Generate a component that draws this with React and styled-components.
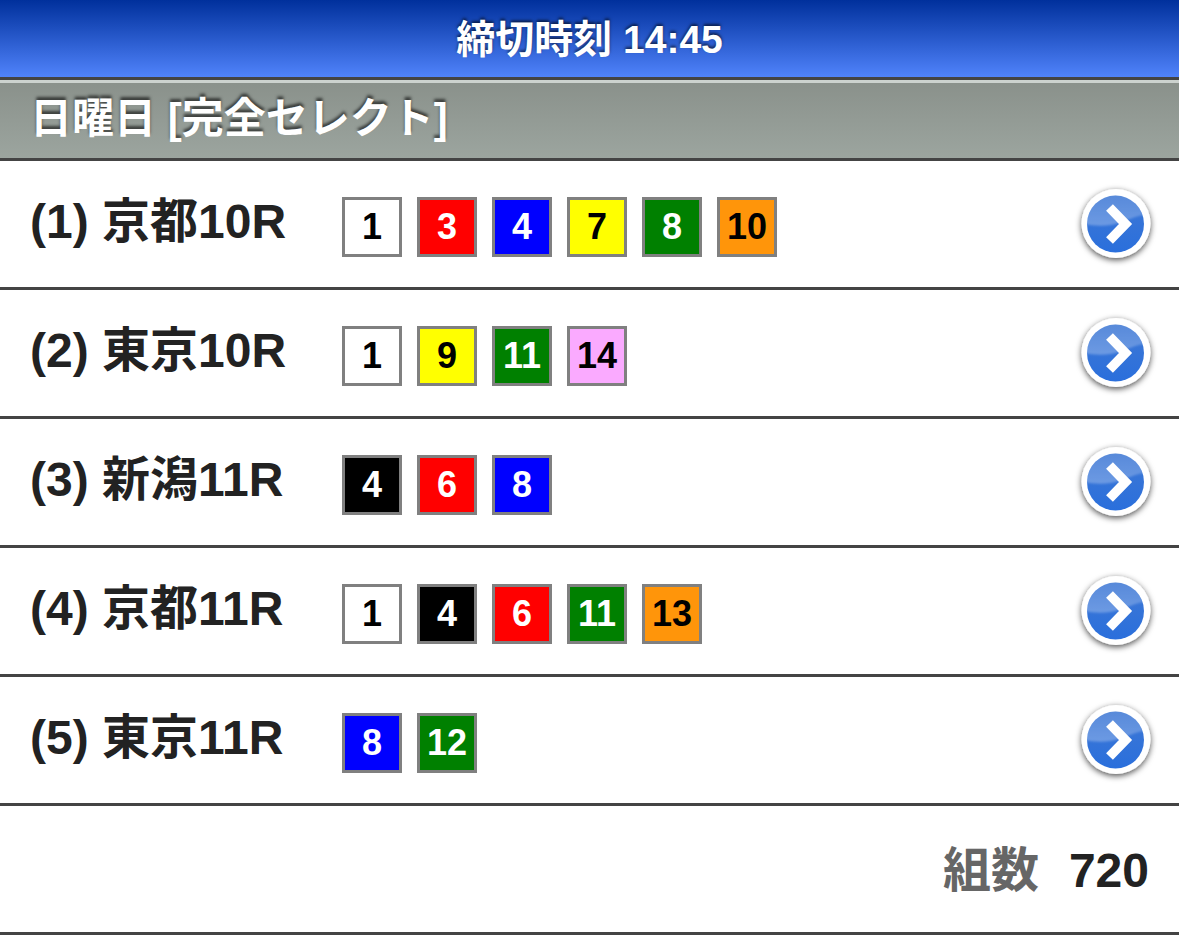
import styled, { createGlobalStyle } from 'styled-components'

const GlobalStyle = createGlobalStyle`
  body {
    margin: 0;
    background: #fff;
    color: #222;
    font-family: 'Liberation Sans', 'Noto Sans CJK JP', sans-serif;
    font-weight: bold;
  }
`

const LINE = '#444'

const TILE_COLORS = {
  white: { bg: '#fff', fg: '#000' },
  black: { bg: '#000', fg: '#fff' },
  red: { bg: '#f00', fg: '#fff' },
  blue: { bg: '#00f', fg: '#fff' },
  yellow: { bg: '#ff0', fg: '#000' },
  green: { bg: '#008000', fg: '#fff' },
  orange: { bg: '#ff950a', fg: '#000' },
  pink: { bg: '#faaaff', fg: '#000' },
}

const races = [
  {
    name: '京都10R',
    horses: [[1, 'white'], [3, 'red'], [4, 'blue'], [7, 'yellow'], [8, 'green'], [10, 'orange']],
  },
  {
    name: '東京10R',
    horses: [[1, 'white'], [9, 'yellow'], [11, 'green'], [14, 'pink']],
  },
  {
    name: '新潟11R',
    horses: [[4, 'black'], [6, 'red'], [8, 'blue']],
  },
  {
    name: '京都11R',
    horses: [[1, 'white'], [4, 'black'], [6, 'red'], [11, 'green'], [13, 'orange']],
  },
  {
    name: '東京11R',
    horses: [[8, 'blue'], [12, 'green']],
  },
]

const Header = styled.header`
  padding: 18px 30px 15px;
  border-bottom: 3px solid ${LINE};
  background: linear-gradient(#00309c, #5083fb);
  text-align: center;
`

const Title = styled.h1`
  margin: 0;
  color: #fff;
  font-size: 39px;
  line-height: 44px;
  text-shadow: 0 -2px 3px rgba(0, 0, 0, 0.6);
`

const SectionTitle = styled.h2`
  margin: 0;
  padding: 12px 30px 15px;
  border-top: 3px solid #ccd2ce;
  border-bottom: 3px solid ${LINE};
  background: linear-gradient(#8a918b, #9ca59f) padding-box;
  color: #fff;
  font-size: 42px;
  line-height: 48px;
  text-shadow: 0 -3px 3px rgba(0, 0, 0, 0.6);
`

const RaceList = styled.ol`
  margin: 0;
  padding: 0;
  list-style: none;
`

const RaceLink = styled.a`
  display: flex;
  align-items: center;
  height: 126px;
  padding: 0 21px 0 30px;
  border-bottom: 3px solid ${LINE};
  color: inherit;
  text-decoration: none;
`

const RaceName = styled.span`
  width: 312px;
  padding-bottom: 4px;
  font-size: 48px;
  line-height: 54px;
  white-space: nowrap;
`

const Horses = styled.span`
  display: flex;
  flex: 1;
  gap: 15px;
  padding-top: 6px;
`

const Tile = styled.span`
  box-sizing: border-box;
  width: 60px;
  height: 60px;
  border: 3px solid #808080;
  background: ${({ $color }) => TILE_COLORS[$color].bg};
  color: ${({ $color }) => TILE_COLORS[$color].fg};
  font-size: 36px;
  line-height: 54px;
  text-align: center;
`

const Arrow = styled.svg`
  flex: none;
  width: 84px;
  height: 90px;
`

const Total = styled.dl`
  display: flex;
  justify-content: flex-end;
  align-items: center;
  gap: 30px;
  height: 122px;
  margin: 0;
  padding: 4px 30px 0;
  border-bottom: 3px solid ${LINE};
  font-size: 48px;
  line-height: 54px;

  dt {
    color: #666;
  }

  dd {
    margin: 0;
  }
`

const ArrowDefs = () => (
  <svg width="0" height="0" style={{ position: 'absolute' }} aria-hidden="true">
    <defs>
      <linearGradient id="disc" x1="0" y1="0" x2="0" y2="1">
        <stop offset="0" stopColor="#3f78d4" />
        <stop offset="1" stopColor="#2a6fdc" />
      </linearGradient>
      <linearGradient id="gloss" x1="0" y1="0" x2="0" y2="1">
        <stop offset="0" stopColor="#fff" stopOpacity="0.1" />
        <stop offset="1" stopColor="#fff" stopOpacity="0.28" />
      </linearGradient>
      <filter id="shadow" x="-20%" y="-20%" width="140%" height="150%">
        <feDropShadow dx="0" dy="2" stdDeviation="3" floodColor="#000" floodOpacity="0.7" />
      </filter>
      <filter id="soften">
        <feGaussianBlur stdDeviation="1" />
      </filter>
      <clipPath id="disc-clip">
        <circle cx="41.5" cy="45" r="28.5" />
      </clipPath>
    </defs>
  </svg>
)

const ArrowIcon = () => (
  <Arrow viewBox="0 0 84 90" aria-hidden="true">
    <circle cx="42" cy="44.5" r="34.5" fill="#fff" filter="url(#shadow)" />
    <circle cx="41.5" cy="45" r="28.5" fill="url(#disc)" />
    <g clipPath="url(#disc-clip)">
      <path d="M8 10H76V34C66 36 58 39 48 43S24 48 8 45z" fill="url(#gloss)" filter="url(#soften)" />
    </g>
    <path d="M35.5 28.5L51.5 45L35.5 61.5" fill="none" stroke="#fff" strokeWidth="9.5" />
  </Arrow>
)

const App = () => (
  <>
    <GlobalStyle />
    <ArrowDefs />
    <Header>
      <Title>締切時刻 14:45</Title>
    </Header>
    <main>
      <SectionTitle>日曜日 [完全セレクト]</SectionTitle>
      <RaceList>
        {races.map(({ name, horses }, i) => (
          <li key={name}>
            <RaceLink href={`#race-${i + 1}`}>
              <RaceName>{`(${i + 1}) ${name}`}</RaceName>
              <Horses>
                {horses.map(([number, color]) => (
                  <Tile key={number} $color={color}>
                    {number}
                  </Tile>
                ))}
              </Horses>
              <ArrowIcon />
            </RaceLink>
          </li>
        ))}
      </RaceList>
      <Total>
        <dt>組数</dt>
        <dd>720</dd>
      </Total>
    </main>
  </>
)

export default App
